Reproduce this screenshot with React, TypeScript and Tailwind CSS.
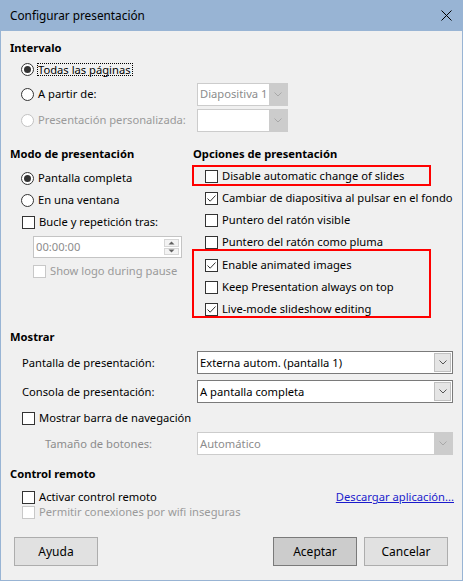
import React from "react";

const Chevron = ({ color = "#606060" }: { color?: string }) => (
  <svg width="8" height="5" viewBox="0 0 8 5">
    <path d="M0.5 0.5 L4 4 L7.5 0.5" fill="none" stroke={color} strokeWidth="1" />
  </svg>
);

function Radio({ checked, disabled }: { checked?: boolean; disabled?: boolean }) {
  return (
    <span
      className={`w-[13px] h-[13px] rounded-full border bg-white flex items-center justify-center shrink-0 ${
        disabled ? "border-[#c2c2c2]" : "border-[#333333]"
      }`}
    >
      {checked && <span className="w-[7px] h-[7px] rounded-full bg-[#333333]" />}
    </span>
  );
}

function Check({ checked, disabled }: { checked?: boolean; disabled?: boolean }) {
  return (
    <span
      className={`w-[13px] h-[13px] border bg-white flex items-center justify-center shrink-0 ${
        disabled ? "border-[#c8c8c8]" : "border-[#333333]"
      }`}
    >
      {checked && (
        <svg width="11" height="11" viewBox="0 0 11 11">
          <path d="M1.5 5.5 L4.2 8.2 L9.5 2.5" fill="none" stroke="#333333" strokeWidth="1" />
        </svg>
      )}
    </span>
  );
}

function Combo({
  value,
  disabled,
  width,
}: {
  value: string;
  disabled?: boolean;
  width: string;
}) {
  return (
    <div
      className={`${width} h-[23px] flex items-stretch bg-white border ${
        disabled ? "border-[#cccccc]" : "border-[#7a7a7a]"
      }`}
    >
      <div
        className={`flex-1 flex items-center pl-[2px] whitespace-nowrap overflow-hidden ${
          disabled ? "text-[#8c8c8c]" : "text-black"
        }`}
      >
        {value}
      </div>
      {disabled ? (
        <div className="w-[18px] bg-[#cccccc] flex items-center justify-center">
          <Chevron color="#a8a8a8" />
        </div>
      ) : (
        <div className="w-[17px] my-[1px] mr-[1px] bg-[#e5e5e5] border border-[#c0c0c0] flex items-center justify-center">
          <Chevron color="#555555" />
        </div>
      )}
    </div>
  );
}

function Heading({ children }: { children: React.ReactNode }) {
  return <div className="h-[16px] flex items-center font-bold whitespace-nowrap">{children}</div>;
}

function Btn({ label, primary, className = "" }: { label: string; primary?: boolean; className?: string }) {
  return (
    <div
      className={`w-[84px] h-[29px] flex items-center justify-center border text-[12px] ${
        primary ? "bg-[#cccccc] border-[#7a7a7a]" : "bg-[#e1e1e1] border-[#adadad]"
      } ${className}`}
    >
      {label}
    </div>
  );
}

export default function App() {
  return (
    <div className="w-[463px] h-[581px] flex flex-col bg-[#98b4d4] font-['Noto_Sans',sans-serif] text-[11.2px] text-black leading-none">
      {/* Title bar */}
      <div className="h-[31px] shrink-0 flex items-center justify-between pl-[10px] pr-[11px]">
        <span className="text-[11.8px]">Configurar presentación</span>
        <svg width="11" height="11" viewBox="0 0 11 11">
          <path d="M0.5 0.5 L10.5 10.5 M10.5 0.5 L0.5 10.5" stroke="#000" strokeWidth="1" />
        </svg>
      </div>

      <div className="flex-1 px-[1px] pb-[1px] flex">
        <div className="flex-1 bg-[#f0f0f0] pl-[9px] pt-[9px] flex flex-col">
          {/* Intervalo */}
          <Heading>Intervalo</Heading>
          <div className="pl-[11px] flex flex-col">
            <div className="mt-[2px] h-[22px] flex items-center">
              <Radio checked />
              <span className="ml-[3px] border border-dotted border-black leading-[11px] h-[13px] pr-[1px]">
                Todas las páginas
              </span>
            </div>
            <div className="mt-[2px] h-[24px] flex items-center">
              <div className="w-[176px] flex items-center">
                <Radio />
                <span className="ml-[4px]">A partir de:</span>
              </div>
              <Combo value="Diapositiva 1" disabled width="w-[91px]" />
            </div>
            <div className="mt-[3px] h-[22px] flex items-center">
              <div className="w-[176px] flex items-center">
                <Radio disabled />
                <span className="ml-[4px] text-[#9a9a9a]">Presentación personalizada:</span>
              </div>
              <Combo value="" disabled width="w-[91px]" />
            </div>
          </div>

          {/* Two columns */}
          <div className="flex mt-[15px]">
            <div className="w-[183px] shrink-0 flex flex-col">
              <Heading>Modo de presentación</Heading>
              <div className="mt-[5px] pl-[11px] h-[22px] flex items-center">
                <Radio checked />
                <span className="ml-[4px]">Pantalla completa</span>
              </div>
              <div className="pl-[11px] h-[22px] flex items-center">
                <Radio />
                <span className="ml-[4px]">En una ventana</span>
              </div>
              <div className="pl-[12px] h-[22px] flex items-center">
                <Check />
                <span className="ml-[4px]">Bucle y repetición tras:</span>
              </div>
              <div className="mt-[3px] ml-[23px] w-[149px] h-[22px] bg-white border border-[#c4c4c4] flex items-stretch">
                <div className="flex-1 flex items-center pl-[2px] text-[#8c8c8c]">00:00:00</div>
                <div className="w-[15px] my-[2px] mr-[2px] flex flex-col gap-[1px]">
                  <div className="flex-1 border border-[#d6d6d6] bg-[#f3f3f3] flex items-center justify-center">
                    <svg width="7" height="4" viewBox="0 0 7 4">
                      <path d="M0.5 3.5 L3.5 0.5 L6.5 3.5 Z" fill="#606060" />
                    </svg>
                  </div>
                  <div className="flex-1 border border-[#d6d6d6] bg-[#f3f3f3] flex items-center justify-center">
                    <svg width="7" height="4" viewBox="0 0 7 4">
                      <path d="M0.5 0.5 L3.5 3.5 L6.5 0.5 Z" fill="#606060" />
                    </svg>
                  </div>
                </div>
              </div>
              <div className="mt-[2px] pl-[23px] h-[22px] flex items-center">
                <Check disabled />
                <span className="ml-[4px] text-[#9a9a9a] whitespace-nowrap">Show logo during pause</span>
              </div>
            </div>

            <div className="flex flex-col">
              <Heading>Opciones de presentación</Heading>
              <div className="relative mt-[3px] w-[239px] -ml-[1px]">
                <div className="pl-[13px] h-[22px] flex items-center whitespace-nowrap">
                  <Check />
                  <span className="ml-[4px]">Disable automatic change of slides</span>
                </div>
                <div className="absolute left-0 top-0 w-[239px] h-[21px] border-2 border-[#ff0000] pointer-events-none" />
              </div>
              <div className="pl-[12px] h-[22px] flex items-center whitespace-nowrap">
                <Check checked />
                <span className="ml-[4px]">Cambiar de diapositiva al pulsar en el fondo</span>
              </div>
              <div className="pl-[12px] h-[22px] flex items-center whitespace-nowrap">
                <Check />
                <span className="ml-[4px]">Puntero del ratón visible</span>
              </div>
              <div className="pl-[12px] h-[22px] flex items-center whitespace-nowrap">
                <Check />
                <span className="ml-[4px]">Puntero del ratón como pluma</span>
              </div>
              <div className="relative mt-[1px] w-[239px] -ml-[1px]">
                <div className="pl-[13px] h-[22px] flex items-center whitespace-nowrap">
                  <Check checked />
                  <span className="ml-[4px]">Enable animated images</span>
                </div>
                <div className="pl-[13px] h-[22px] flex items-center whitespace-nowrap">
                  <Check />
                  <span className="ml-[4px]">Keep Presentation always on top</span>
                </div>
                <div className="pl-[13px] h-[22px] flex items-center whitespace-nowrap">
                  <Check checked />
                  <span className="ml-[4px]">Live-mode slideshow editing</span>
                </div>
                <div className="absolute left-0 top-[-5px] w-[239px] h-[69px] border-2 border-[#ff0000] pointer-events-none" />
              </div>
            </div>
          </div>

          {/* Mostrar */}
          <div className="mt-[9px]">
            <Heading>Mostrar</Heading>
          </div>
          <div className="pl-[12px] flex flex-col">
            <div className="mt-[6px] h-[23px] flex items-center">
              <div className="w-[175px]">Pantalla de presentación:</div>
              <Combo value="Externa autom. (pantalla 1)" width="w-[256px]" />
            </div>
            <div className="mt-[6px] h-[23px] flex items-center">
              <div className="w-[175px]">Consola de presentación:</div>
              <Combo value="A pantalla completa" width="w-[256px]" />
            </div>
            <div className="mt-[4px] h-[22px] flex items-center">
              <Check />
              <span className="ml-[4px]">Mostrar barra de navegación</span>
            </div>
            <div className="mt-[3px] h-[23px] flex items-center">
              <div className="w-[175px] pl-[23px] text-[#8c8c8c]">Tamaño de botones:</div>
              <Combo value="Automático" disabled width="w-[256px]" />
            </div>
          </div>

          {/* Control remoto */}
          <div className="mt-[11px]">
            <Heading>Control remoto</Heading>
          </div>
          <div className="pl-[12px] pr-[8px] flex flex-col">
            <div className="mt-[7px] h-[16px] flex items-center justify-between">
              <div className="flex items-center">
                <Check />
                <span className="ml-[4px]">Activar control remoto</span>
              </div>
              <span className="text-[#1a1acc] underline">Descargar aplicación...</span>
            </div>
            <div className="h-[14px] flex items-center">
              <Check disabled />
              <span className="ml-[4px] text-[#9a9a9a]">Permitir conexiones por wifi inseguras</span>
            </div>
          </div>

          {/* Buttons */}
          <div className="mt-[18px] pl-[4px] pr-[14px] flex items-center">
            <Btn label="Ayuda" />
            <div className="flex-1" />
            <Btn label="Aceptar" primary />
            <Btn label="Cancelar" className="ml-[7px]" />
          </div>
        </div>
      </div>
    </div>
  );
}
